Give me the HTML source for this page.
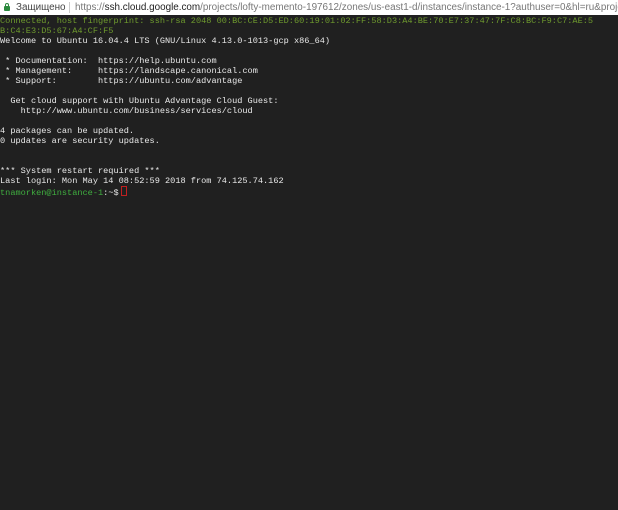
<!DOCTYPE html>
<html><head><meta charset="utf-8"><style>
html,body{margin:0;padding:0;width:618px;height:510px;overflow:hidden;background:#202020}
.bar{position:absolute;left:0;top:0;width:618px;height:15px;background:#fff;font-family:"Liberation Sans",sans-serif;font-size:9.9px;line-height:15px;white-space:nowrap;overflow:hidden;color:#555}
.bar .lock{position:absolute;left:4px;top:6px;width:6px;height:5px;background:#2b8a3e;border-radius:1px}
.bar .lock:before{content:"";position:absolute;left:1px;top:-3px;width:2px;height:3px;border:1px solid #2b8a3e;border-bottom:none;border-radius:2px 2px 0 0}
.bar .sec{position:absolute;left:16px;top:0;color:#444}
.bar .sep{position:absolute;left:69px;top:2px;width:1px;height:11px;background:#ccc}
.bar .url{position:absolute;left:75px;top:0;color:#777}
.bar .url b{font-weight:normal;color:#222}
pre{position:absolute;left:0;top:16px;margin:0;font-family:"Liberation Mono",monospace;font-size:8.6px;line-height:10px;color:#e8e8e8;white-space:pre}
.g{color:#6e9a2e}
.p{color:#3fae3f}
.cur{display:inline-block;width:4px;height:8px;border:1px solid #c02020;vertical-align:-1px;margin-left:2px}
</style></head><body>
<div class="bar"><span class="lock"></span><span class="sec">Защищено</span><span class="sep"></span><span class="url">https://<b>ssh.cloud.google.com</b>/projects/lofty-memento-197612/zones/us-east1-d/instances/instance-1?authuser=0&amp;hl=ru&amp;projectN</span></div>
<pre><span class="g">Connected, host fingerprint: ssh-rsa 2048 00:BC:CE:D5:ED:60:19:01:02:FF:58:D3:A4:BE:70:E7:37:47:7F:C8:BC:F9:C7:AE:5
B:C4:E3:D5:67:A4:CF:F5</span>
Welcome to Ubuntu 16.04.4 LTS (GNU/Linux 4.13.0-1013-gcp x86_64)

 * Documentation:  https://help.ubuntu.com
 * Management:     https://landscape.canonical.com
 * Support:        https://ubuntu.com/advantage

  Get cloud support with Ubuntu Advantage Cloud Guest:
    http://www.ubuntu.com/business/services/cloud

4 packages can be updated.
0 updates are security updates.


*** System restart required ***
Last login: Mon May 14 08:52:59 2018 from 74.125.74.162
<span class="p">tnamorken@instance-1</span>:~$<span class="cur"></span></pre>
</body></html>
